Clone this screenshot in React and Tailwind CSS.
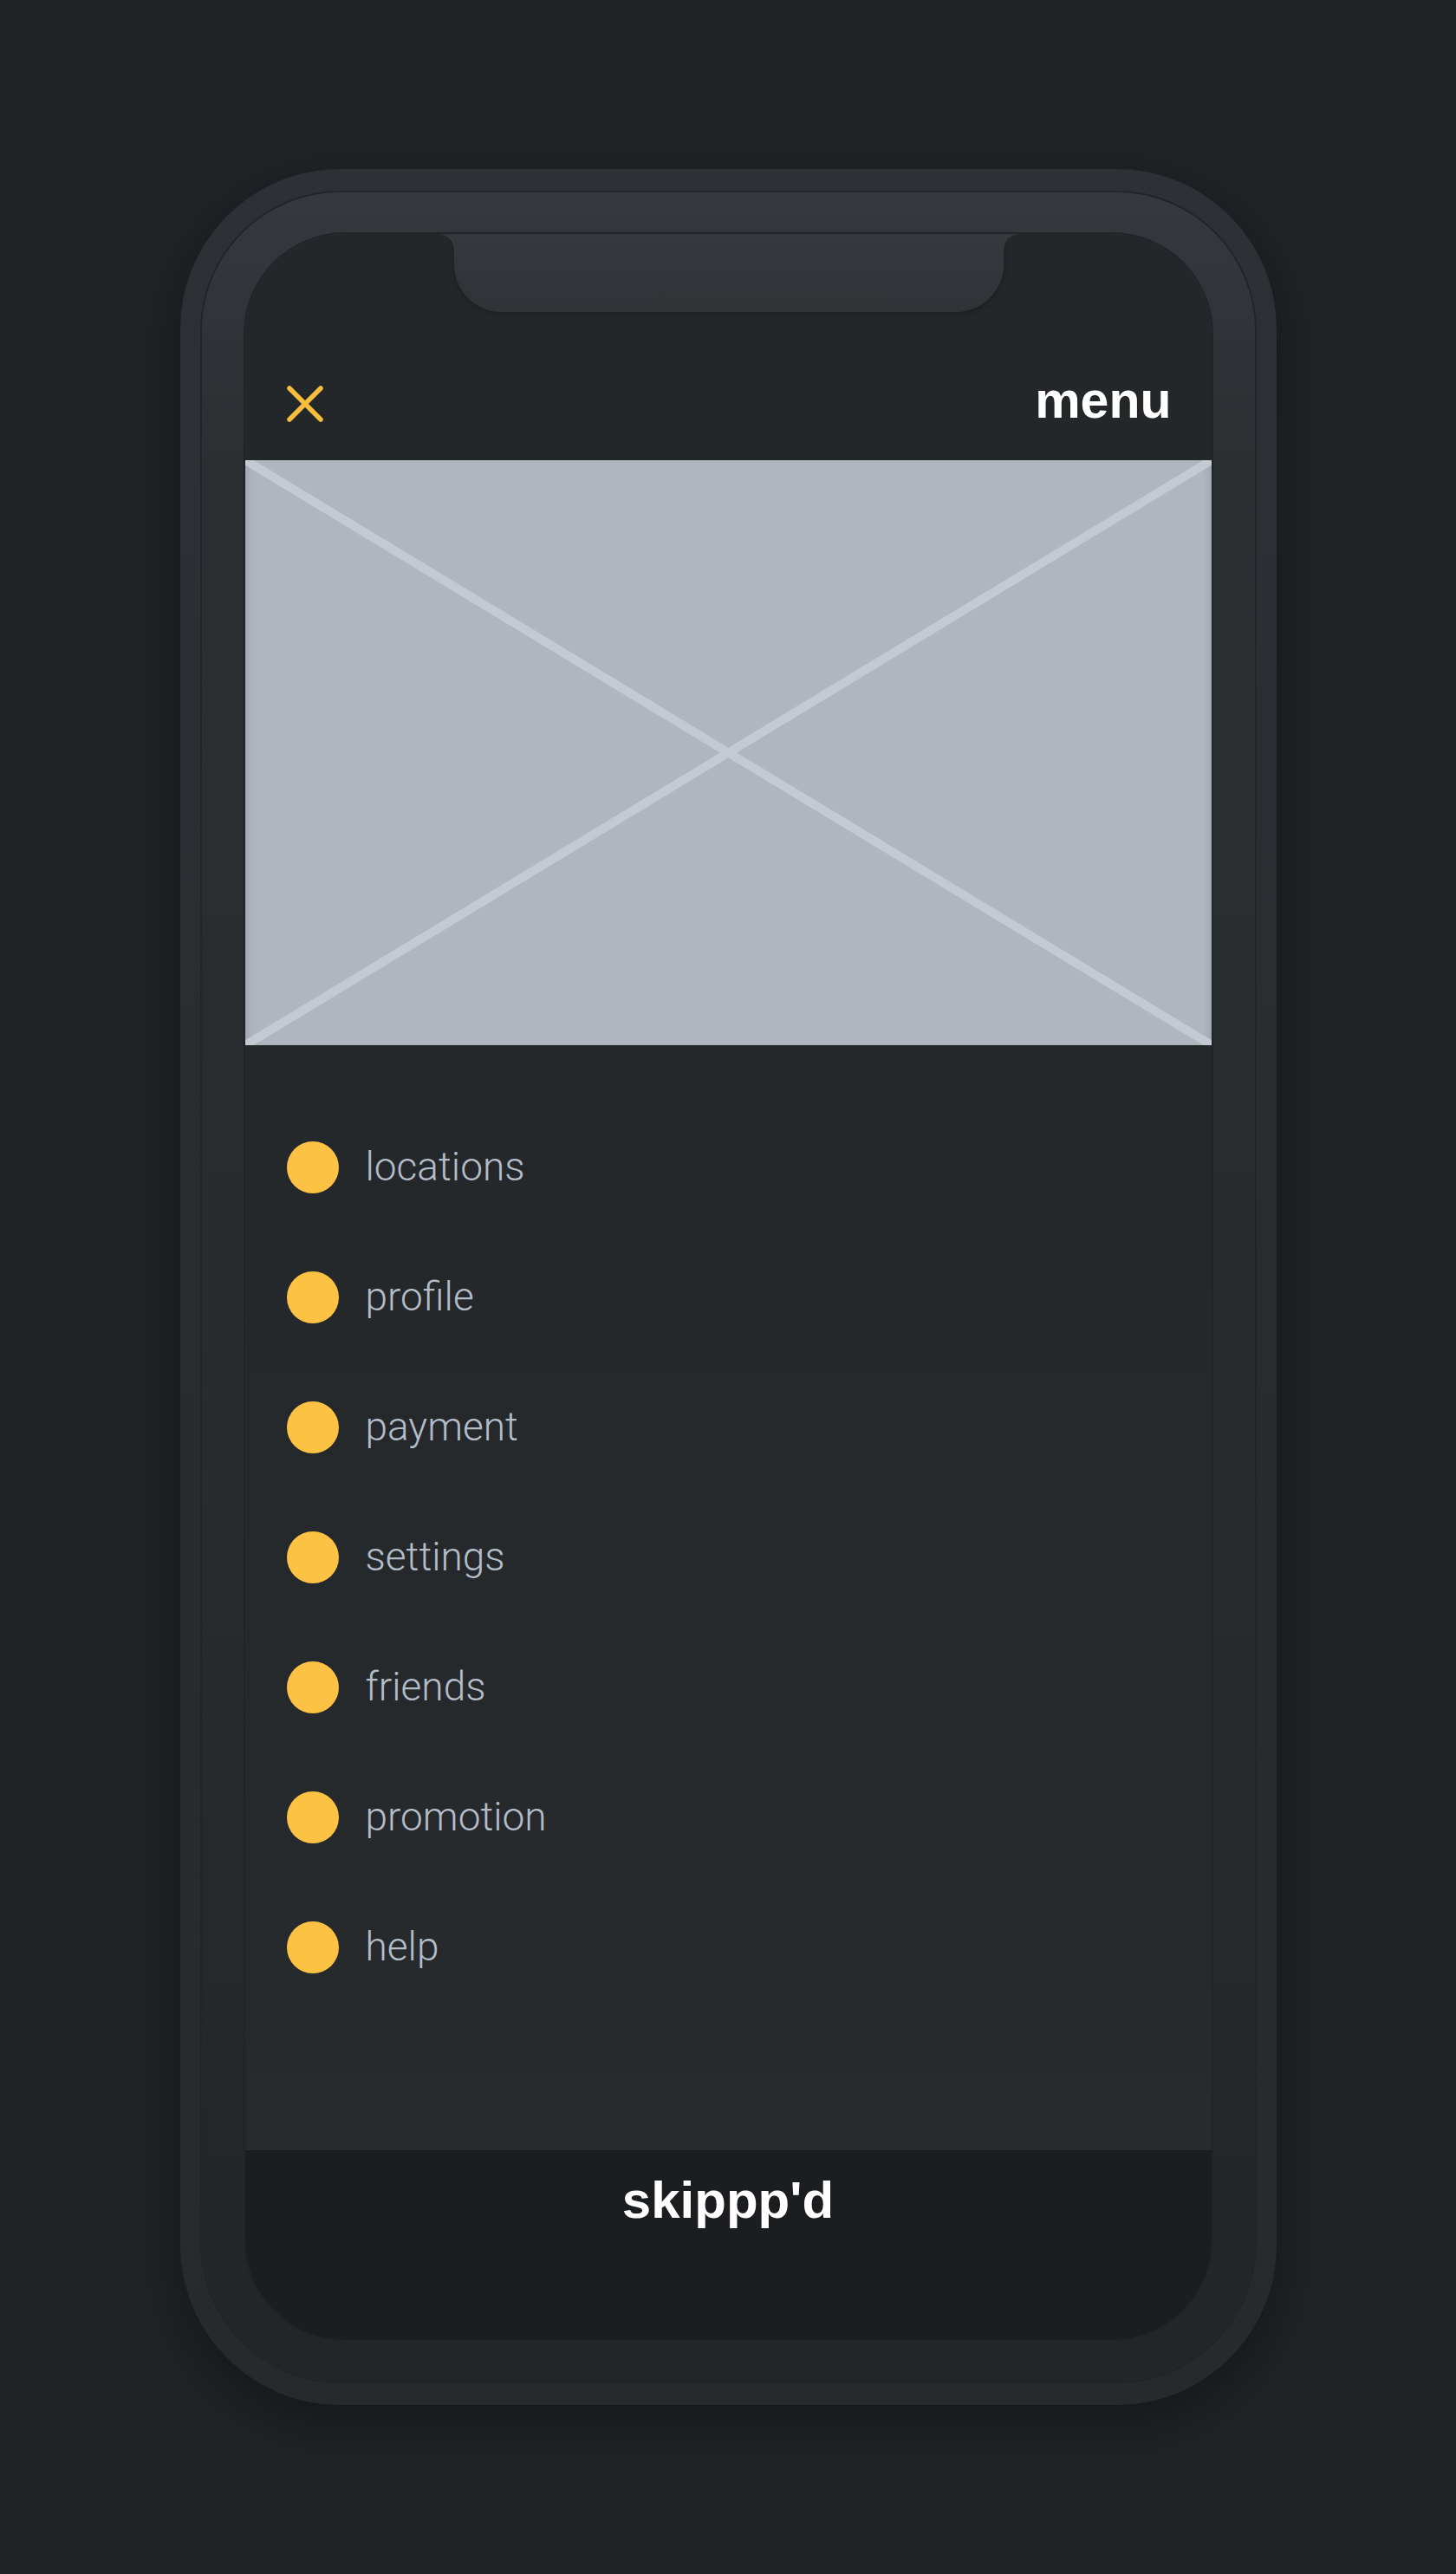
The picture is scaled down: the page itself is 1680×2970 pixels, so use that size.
export default function App() {
  const items = ["locations", "profile", "payment", "settings", "friends", "promotion", "help"];
  return (
    <div className="w-[1680px] h-[2970px] bg-[#202326] pt-[195px] overflow-hidden">
      <div className="mx-auto w-[1265px] h-[2580px] rounded-[185px] p-[25px] pt-[27px] pb-[27px] bg-[linear-gradient(180deg,#2d3034_0%,#2a2d30_40%,#27292c_100%)] shadow-[0_20px_60px_rgba(0,0,0,0.35)]">
        <div className="w-full h-full rounded-[160px] px-[50px] py-[48px] bg-[linear-gradient(180deg,#35383c_0%,#2c2f32_12%,#282b2e_60%,#232629_100%)] shadow-[0_0_0_2px_#222528]">
          <div className="relative w-full h-full rounded-[115px] overflow-hidden flex flex-col bg-[linear-gradient(180deg,#24272a_0%,#25282b_50%,#282b2e_100%)] shadow-[0_0_0_2px_#222528]">
            {/* notch */}
            <div className="absolute left-[241px] top-0 w-[634px] h-[90px] bg-[linear-gradient(180deg,#35383c,#303336)] rounded-b-[55px] shadow-[0_2px_6px_rgba(0,0,0,0.25)]">
              <div className="absolute -left-[18px] top-0 w-[18px] h-[18px] bg-[radial-gradient(circle_at_0_100%,transparent_17.5px,#35383c_18px)]" />
              <div className="absolute -right-[18px] top-0 w-[18px] h-[18px] bg-[radial-gradient(circle_at_100%_100%,transparent_17.5px,#35383c_18px)]" />
            </div>

            {/* header */}
            <div className="h-[261px] shrink-0 pt-[130px] pl-[48px] pr-[46px] flex items-center justify-between">
              <svg width="42" height="42" viewBox="0 0 42 42" fill="none">
                <line x1="3" y1="3" x2="39" y2="39" stroke="#f7bd3d" strokeWidth="5.5" strokeLinecap="round" />
                <line x1="39" y1="3" x2="3" y2="39" stroke="#f7bd3d" strokeWidth="5.5" strokeLinecap="round" />
              </svg>
              <span className="-mt-[6px] font-['Liberation_Sans',Arial,sans-serif] font-bold text-[59px] leading-[59px] text-white">menu</span>
            </div>

            {/* image placeholder */}
            <div className="relative h-[675px] shrink-0 bg-[#afb6c0] shadow-[inset_8px_0_10px_-6px_rgba(0,0,0,0.12),inset_-8px_0_10px_-6px_rgba(0,0,0,0.12)]">
              <svg className="absolute inset-0 w-full h-full" viewBox="0 0 1116 675" preserveAspectRatio="none">
                <line x1="0" y1="0" x2="1116" y2="675" stroke="#c4cad1" strokeWidth="10" />
                <line x1="1116" y1="0" x2="0" y2="675" stroke="#c4cad1" strokeWidth="10" />
              </svg>
            </div>

            {/* menu list */}
            <div className="flex-1 pt-[66px] flex flex-col">
              {items.map((t) => (
                <div key={t} className="h-[150px] flex items-center pl-[48px]">
                  <div className="w-[60px] h-[60px] rounded-full bg-[#fcc244] shrink-0" />
                  <span className="ml-[31px] -mt-[3px] font-['Roboto',sans-serif] font-light text-[46px] leading-[60px] text-[#b4bcc8]">{t}</span>
                </div>
              ))}
            </div>

            {/* bottom bar */}
            <div className="h-[219px] shrink-0 bg-[#1b1d21] pt-[28px] flex justify-center">
              <span className="font-['Liberation_Sans',Arial,sans-serif] font-bold text-[60px] leading-[60px] text-white">skippp'd</span>
            </div>
          </div>
        </div>
      </div>
    </div>
  );
}
